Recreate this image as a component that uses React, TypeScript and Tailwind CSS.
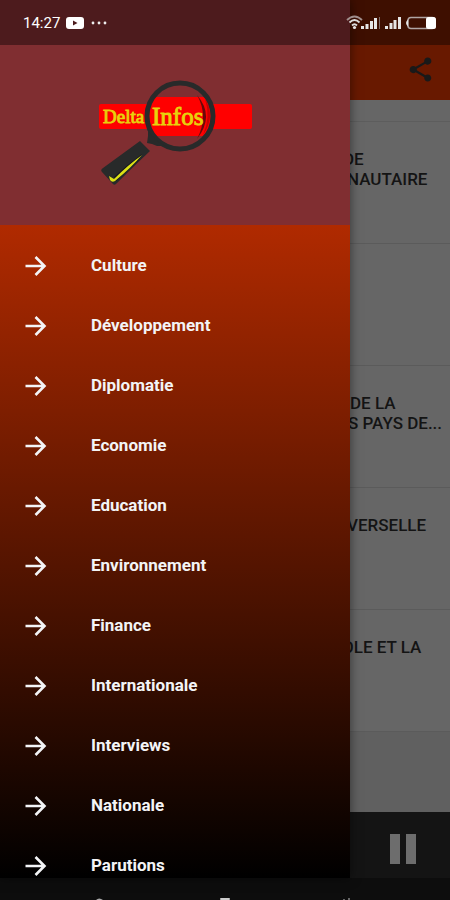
import { MdShare } from 'react-icons/md'

const categories = [
  'Culture',
  'Développement',
  'Diplomatie',
  'Economie',
  'Education',
  'Environnement',
  'Finance',
  'Internationale',
  'Interviews',
  'Nationale',
  'Parutions',
]

interface Article {
  id: number
  lines: { text: string; indent: string }[]
}

// the drawer covers the left part of every title
const articles: Article[] = [
  { id: 1, lines: [{ text: 'DE', indent: 'pl-[343px]' }, { text: 'NAUTAIRE', indent: 'pl-[347px]' }] },
  { id: 2, lines: [] },
  { id: 3, lines: [{ text: 'DE LA', indent: 'pl-[350px]' }, { text: 'S PAYS DE...', indent: 'pl-[348px]' }] },
  { id: 4, lines: [{ text: 'VERSELLE', indent: 'pl-[347px]' }] },
  { id: 5, lines: [{ text: 'OLE ET LA', indent: 'pl-[342px]' }] },
]

function Logo() {
  return (
    <svg viewBox="0 0 170 130" className="h-[130px] w-[170px]" role="img" aria-label="Delta Infos">
      <rect x="9" y="34" width="153" height="25" rx="2" fill="#ff0000" />
      <clipPath id="lens">
        <circle cx="90" cy="46" r="32" />
      </clipPath>
      <circle cx="90" cy="46" r="32" fill="#802e31" />
      <rect x="58" y="27" width="64" height="39" fill="#ff0000" clipPath="url(#lens)" />
      <path d="M107 25 Q125 46 107 69 Q119 46 107 25Z" fill="#6b0808" />
      <path d="M115 29 Q126 46 113 65 Q121 47 115 29Z" fill="#c80000" />
      <circle cx="90" cy="46" r="33" fill="none" stroke="#282a2a" strokeWidth="5" />
      <path d="M58 60 Q64 71 76 76 L67 76 L62 74 L57 73 L58 66Z" fill="#282a2a" />
      <path d="M50 71 L60 81 Q43 97 26 114 Q24 116 22 113 L12 102 Q10 100 13 98Z" fill="#282a2a" />
      <path d="M24 107 Q38 94 52 84 L49 90 L26 111Z" fill="#14151f" />
      <path d="M19 106 L24 109 Q38 95 52 85 Q42 97 25 111 Q22 113 20 110Z" fill="#dbe016" />
      <g
        fill="#e8d20c"
        stroke="#e8d20c"
        strokeWidth="0.9"
        fontFamily="'Liberation Serif', serif"
      >
        <text x="13" y="53" fontSize="19">Delta</text>
        <text x="62" y="55" fontSize="25">Infos</text>
      </g>
    </svg>
  )
}

function ArrowIcon() {
  return (
    <svg viewBox="0 0 28 28" className="size-7" fill="none" stroke="currentColor" strokeWidth="2.6" aria-hidden="true">
      <path d="M4.500 14H23M14.500 5L23.500 14L14.500 23" />
    </svg>
  )
}

function StatusBar() {
  return (
    <div className="absolute inset-x-0 top-0 z-30 flex h-[45px] items-center justify-between bg-black/40 pr-3 pl-[23px] text-white">
      <div className="flex items-center gap-[6px]">
        <span className="text-[15px] leading-5">14:27</span>
        <svg viewBox="0 0 18 14" className="h-[14px] w-[18px]" aria-hidden="true">
          <rect y="1" width="18" height="12" rx="3" fill="#fff" />
          <path d="M7 4.5 L11.5 7 L7 9.5Z" fill="#4b1b1c" />
        </svg>
        <svg viewBox="0 0 18 4" className="h-1 w-[18px]" fill="#eee" aria-hidden="true">
          <circle cx="3" cy="2" r="1.4" />
          <circle cx="9" cy="2" r="1.4" />
          <circle cx="15" cy="2" r="1.4" />
        </svg>
      </div>
      <svg viewBox="0 0 92 18" className="h-[18px] w-[92px]" fill="#e6e6e6" aria-hidden="true">
        <g fill="none" stroke="#ddd" strokeWidth="1.8">
          <path d="M1 6 Q8.5 -1 16 6" stroke="#a08f8c" />
          <path d="M3.5 8.5 Q8.5 3.5 13.5 8.5" />
          <path d="M6 11.5 Q8.5 9 11 11.5" />
        </g>
        <circle cx="8.5" cy="13.5" r="1.6" />
        <path d="M15 12h3v3h-3zM19.5 10h3v5h-3zM24 7h3v8h-3zM28 4h3v11h-3z" />
        <path d="M33 3h1v12h-1z" fill="#806b66" />
        <path d="M39 12h3v3h-3zM43.5 9h3v6h-3zM47.5 6h3v9h-3zM52 3h3v12h-3z" />
        <rect x="62" y="3.5" width="27" height="11" rx="3" fill="none" stroke="#b0a5a3" strokeWidth="1.6" />
        <path d="M62 5.500 Q58 9 62 12.500Z" />
        <rect x="80" y="3" width="10" height="12" rx="2.5" fill="#fff" />
      </svg>
    </div>
  )
}

function Drawer() {
  return (
    <aside className="absolute inset-y-0 left-0 z-20 flex w-[350px] max-w-[85%] flex-col overflow-hidden bg-black shadow-[0_0_10px_rgba(0,0,0,0.5)]">
      <div className="flex h-[225px] shrink-0 items-end bg-[#802e31] pb-[25px] pl-[90px]">
        <Logo />
      </div>
      <nav className="min-h-0 flex-1 overflow-hidden bg-linear-to-b/srgb from-[#b02a00] to-black pt-[11px]">
        <ul>
          {categories.map((name) => (
            <li key={name}>
              <a href="#" className="flex h-[60px] items-center gap-[42px] pl-[21px] text-[17px] font-bold text-gray-100">
                <ArrowIcon />
                {name}
              </a>
            </li>
          ))}
        </ul>
      </nav>
    </aside>
  )
}

// home, recents and back peek out above the lower screen edge
function NavigationBar() {
  return (
    <div className="flex h-[22px] shrink-0 items-end justify-center bg-[#0d0d0d]">
      <svg viewBox="0 0 270 3" className="h-[3px] w-[270px]" aria-hidden="true">
        <path d="M6 3 Q9 0 13 3Z" fill="#aaa" />
        <rect x="130" y="1" width="10" height="2" rx="1" fill="#ccc" />
        <path d="M253 2h2v1h-2zM258 1h2v2h-2z" fill="#666" />
      </svg>
    </div>
  )
}

export default function App() {
  return (
    <div className="flex h-screen flex-col overflow-hidden bg-[#0d0d0d] font-[Roboto,sans-serif]">
      <StatusBar />
      <div className="relative flex min-h-0 flex-1 flex-col">
        <header className="flex h-[100px] shrink-0 items-end justify-end bg-[#681900] pr-[15px] pb-4 shadow">
          <button type="button" aria-label="Partager" className="text-[#191919]">
            <MdShare className="size-[29px]" />
          </button>
        </header>
        <main className="min-h-0 flex-1 overflow-hidden bg-[#606060]">
          <div className="h-[22px] border-b border-[#5d5d5d] bg-[#666]" />
          {articles.map((article) => (
            <article key={article.id} className="h-[122px] overflow-hidden border-b border-[#5b5b5b] bg-[#666] pt-[27px]">
              <h2 className="text-[17px] leading-5 font-medium whitespace-nowrap text-[#141414]">
                {article.lines.map((line) => (
                  <span key={line.text} className={`block ${line.indent}`}>
                    {line.text}
                  </span>
                ))}
              </h2>
            </article>
          ))}
        </main>
        <footer className="flex h-[66px] shrink-0 items-center justify-end bg-[#141414] pr-[34px]">
          <button type="button" aria-label="Pause" className="flex gap-[6px] pt-2">
            <span className="h-[30px] w-[10px] bg-[#6d6d6d]" />
            <span className="h-[30px] w-[10px] bg-[#6d6d6d]" />
          </button>
        </footer>
        <Drawer />
      </div>
      <NavigationBar />
    </div>
  )
}
